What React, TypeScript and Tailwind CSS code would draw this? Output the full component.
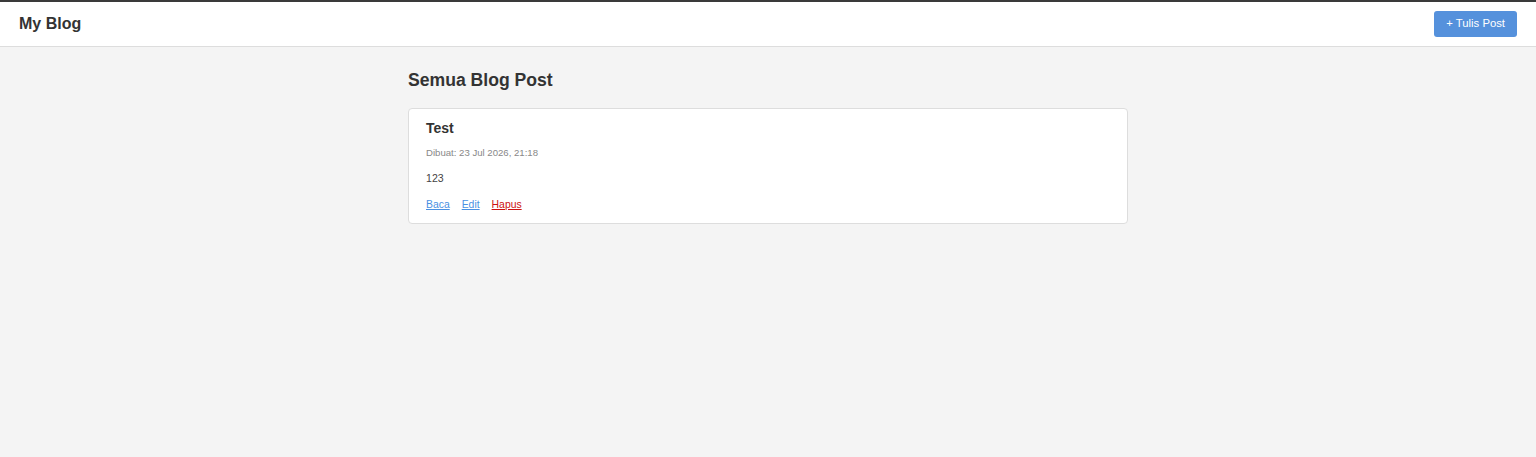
import React from "react";

const App = () => {
  const posts = [{ id: 1, title: "Test", created: "23 Jul 2026, 21:18", body: "123" }];

  return (
    <div className="min-h-[457px] bg-[#f4f4f4] font-['Liberation_Sans',Arial,sans-serif] text-[#333]">
      <header className="h-[47px] bg-white border-t-2 border-t-[#3a3a3a] border-b border-b-[#dddddd] flex items-center justify-between pl-[19px] pr-[19px]">
        <h1 className="text-[16px] font-bold leading-none">My Blog</h1>
        <button className="h-[26px] px-[12px] rounded-[3px] bg-[#5591dc] text-white text-[11.3px] leading-none">
          + Tulis Post
        </button>
      </header>

      <main className="w-[720px] mx-auto pt-[23px]">
        <h2 className="text-[17.6px] font-bold leading-[21px] mb-[17px]">Semua Blog Post</h2>

        {posts.map((post) => (
          <div key={post.id} className="bg-white border border-[#dddddd] rounded-[4px] px-[17px] pt-[11px] pb-[12px] mb-4">
            <h3 className="text-[14px] font-bold leading-[17px]">{post.title}</h3>
            <p className="text-[9.6px] text-[#888] mt-[10px] leading-[12px]">Dibuat: {post.created}</p>
            <p className="text-[10.6px] text-[#444] mt-[13px] leading-[13px]">{post.body}</p>
            <div className="flex gap-[12px] mt-[13px] text-[10.4px] leading-[13px]">
              <a href="#" className="underline text-[#4a90e2]">Baca</a>
              <a href="#" className="underline text-[#4a90e2]">Edit</a>
              <a href="#" className="underline text-[#cc1111]">Hapus</a>
            </div>
          </div>
        ))}
      </main>
    </div>
  );
};

export default App;
